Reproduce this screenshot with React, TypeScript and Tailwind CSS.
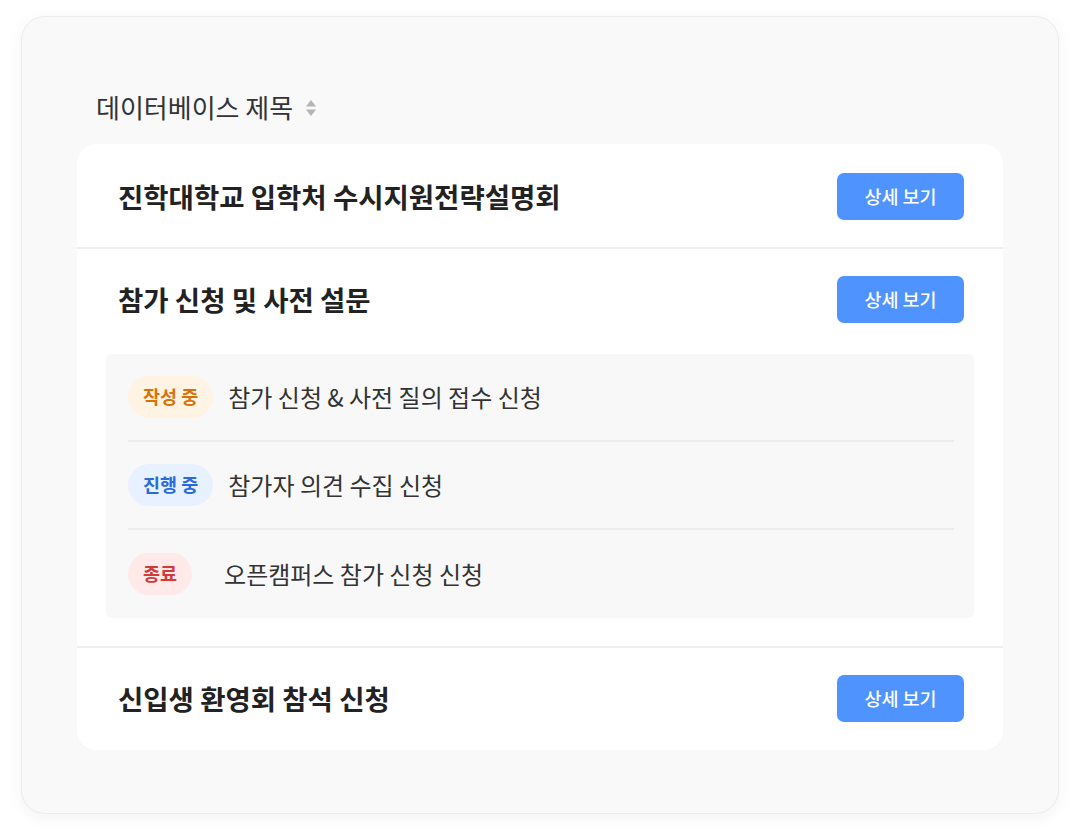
import React from "react";

type Status = "draft" | "progress" | "closed";

interface SubItem {
  status: Status;
  title: string;
}

interface Section {
  id: string;
  title: string;
  items?: SubItem[];
}

const sections: Section[] = [
  { id: "s1", title: "진학대학교 입학처 수시지원전략설명회" },
  {
    id: "s2",
    title: "참가 신청 및 사전 설문",
    items: [
      { status: "draft", title: "참가 신청 & 사전 질의 접수 신청" },
      { status: "progress", title: "참가자 의견 수집 신청" },
      { status: "closed", title: "오픈캠퍼스 참가 신청 신청" },
    ],
  },
  { id: "s3", title: "신입생 환영회 참석 신청" },
];

const badgeStyles: Record<Status, { label: string; className: string; gap: string }> = {
  draft: { label: "작성 중", className: "bg-[#fff3e4] text-[#d9720b]", gap: "ml-[15px]" },
  progress: { label: "진행 중", className: "bg-[#e8f1ff] text-[#2a6ad9]", gap: "ml-[15px]" },
  closed: { label: "종료", className: "bg-[#ffe9e9] text-[#d23a3a]", gap: "ml-[32px]" },
};

function SortIcon() {
  return (
    <svg width="12" height="20" viewBox="0 0 12 20" className="ml-[12px] mt-[2px]">
      <path d="M6 2 L11 8.5 H1 Z" fill="#b4b4b8" />
      <path d="M6 18 L11 11.5 H1 Z" fill="#b4b4b8" />
    </svg>
  );
}

function DetailButton() {
  return (
    <button className="h-[47px] w-[127px] shrink-0 rounded-[7px] bg-[#4f93ff] text-[18.5px] font-medium text-white">
      상세 보기
    </button>
  );
}

export default function App() {
  return (
    <div
      className="min-h-[840px] bg-white px-[21px] pt-4"
      style={{ fontFamily: '"Noto Sans CJK KR", "Noto Sans", sans-serif' }}
    >
      <div className="h-[798px] rounded-[24px] border border-[#ececec] bg-[#f9f9f9] px-[55px] pt-[74px] shadow-[0_4px_16px_rgba(0,0,0,0.05)]">
        <div className="mb-[21px] flex h-8 items-center pl-[19px] text-[26px] leading-8 text-[#333]">
          데이터베이스 제목
          <SortIcon />
        </div>

        <div className="overflow-hidden rounded-[20px] bg-white pb-px">
          {sections.map((section, i) => (
            <div
              key={section.id}
              className={`border-t-2 ${i > 0 ? "border-[#eeeeee]" : "border-white"}`}
            >
              <div className="flex items-center justify-between py-[27px] pl-[41px] pr-[39px]">
                <h3 className="text-[27.5px] font-bold text-[#222]">{section.title}</h3>
                <DetailButton />
              </div>

              {section.items && (
                <div className="mx-[29px] mb-[28px] mt-[4px] rounded-[6px] bg-[#f8f8f9] pl-[22px] pr-[20px]">
                  <ul className="divide-y-2 divide-[#ededee]">
                    {section.items.map((item) => {
                      const badge = badgeStyles[item.status];
                      return (
                        <li key={item.title} className="flex h-[88px] items-center">
                          <span
                            className={`flex h-[42px] items-center rounded-full px-[15px] text-[18.5px] font-semibold ${badge.className}`}
                          >
                            {badge.label}
                          </span>
                          <span className={`${badge.gap} text-[24px] text-[#333]`}>
                            {item.title}
                          </span>
                        </li>
                      );
                    })}
                  </ul>
                </div>
              )}
            </div>
          ))}
        </div>
      </div>
    </div>
  );
}
